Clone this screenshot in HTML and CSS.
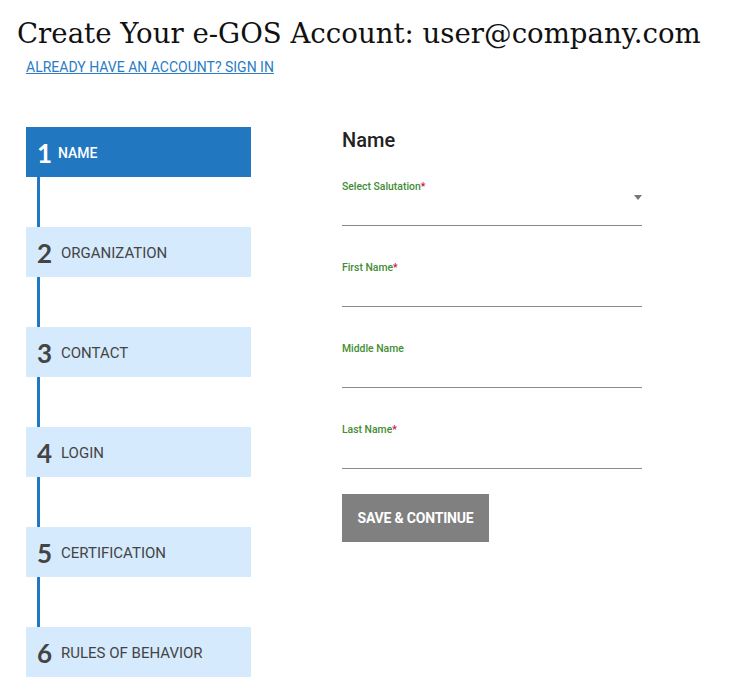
FILE: index.html
```html
<!DOCTYPE html>
<html>
<head>
<meta charset="utf-8">
<link rel="stylesheet" href="styles.css">
</head>
<body>
<header class="top">
  <h1 class="title">Create Your e-GOS Account: user@company.com</h1>
  <a class="signin" href="#">ALREADY HAVE AN ACCOUNT? SIGN IN</a>
</header>
<main class="main">
  <nav class="steps">
    <div class="step active"><span class="num">1</span><span class="label">NAME</span></div>
    <div class="connector"></div>
    <div class="step"><span class="num">2</span><span class="label">ORGANIZATION</span></div>
    <div class="connector"></div>
    <div class="step"><span class="num">3</span><span class="label">CONTACT</span></div>
    <div class="connector"></div>
    <div class="step"><span class="num">4</span><span class="label">LOGIN</span></div>
    <div class="connector"></div>
    <div class="step"><span class="num">5</span><span class="label">CERTIFICATION</span></div>
    <div class="connector"></div>
    <div class="step"><span class="num">6</span><span class="label">RULES OF BEHAVIOR</span></div>
  </nav>
  <section class="form">
    <h2 class="form-title">Name</h2>
    <div class="field select">
      <div class="field-label">Select Salutation<span class="req">*</span></div>
      <div class="field-input"><span class="caret"></span></div>
    </div>
    <div class="field">
      <div class="field-label">First Name<span class="req">*</span></div>
      <div class="field-input"></div>
    </div>
    <div class="field">
      <div class="field-label">Middle Name</div>
      <div class="field-input"></div>
    </div>
    <div class="field">
      <div class="field-label">Last Name<span class="req">*</span></div>
      <div class="field-input"></div>
    </div>
    <button class="save">SAVE &amp; CONTINUE</button>
  </section>
</main>
</body>
</html>
```
FILE: styles.css
```css
* { box-sizing: border-box; }
body {
  margin: 0;
  background: #fff;
  font-family: Roboto, "Liberation Sans", sans-serif;
  color: #222;
}
.top {
  padding: 14px 0 0 17px;
  display: flex;
  flex-direction: column;
  align-items: flex-start;
}
.title {
  margin: 0;
  font-family: "DejaVu Serif", serif;
  font-weight: normal;
  font-size: 27.6px;
  line-height: 40px;
  color: #111;
}
.signin {
  margin: 6px 0 0 9px;
  font-size: 14px;
  line-height: 15px;
  color: #2a7cc4;
  text-decoration: underline;
}
.main {
  display: flex;
  padding: 52px 0 0 26px;
}
.steps {
  width: 225px;
  display: flex;
  flex-direction: column;
}
.step {
  height: 50px;
  background: #d5eafc;
  display: flex;
  align-items: center;
  padding-left: 11px;
  color: #444;
}
.step .num {
  font-family: Lato, "Open Sans", sans-serif;
  font-weight: 700;
  font-size: 26px;
  width: 24px;
  line-height: 1;
  margin-top: 2px;
}
.step .label {
  font-size: 15px;
  line-height: 1;
  margin-top: 2px;
}
.step.active {
  background: #2178c0;
  color: #fff;
}
.step.active .num { width: 21px; }
.step.active .label { font-weight: 500; font-size: 14px; }
.connector {
  height: 50px;
  width: 3px;
  margin-left: 11px;
  background: #2178c0;
}
.form {
  margin-left: 91px;
  width: 300px;
  padding-top: 1px;
}
.form-title {
  margin: 0 0 27px;
  font-size: 20px;
  line-height: 24px;
  font-weight: 500;
  color: #222;
}
.field {
  margin-bottom: 34px;
}
.field-label {
  padding-top: 2px;
  font-size: 10.4px;
  line-height: 12px;
  font-weight: 500;
  color: #3f8d35;
}
.req { color: #d0103a; }
.field-input {
  height: 33px;
  border-bottom: 1px solid #8a8a8a;
  position: relative;
}
.caret {
  position: absolute;
  right: 0;
  top: 2px;
  width: 0;
  height: 0;
  border-left: 4.5px solid transparent;
  border-right: 4.5px solid transparent;
  border-top: 5px solid #777;
}
.save {
  margin-top: -9px;
  width: 147px;
  height: 48px;
  border: 0;
  background: #808080;
  color: #fff;
  font-family: Roboto, "Liberation Sans", sans-serif;
  font-weight: 700;
  font-size: 14px;
  letter-spacing: -0.2px;
  padding: 0;
  cursor: pointer;
}
```
